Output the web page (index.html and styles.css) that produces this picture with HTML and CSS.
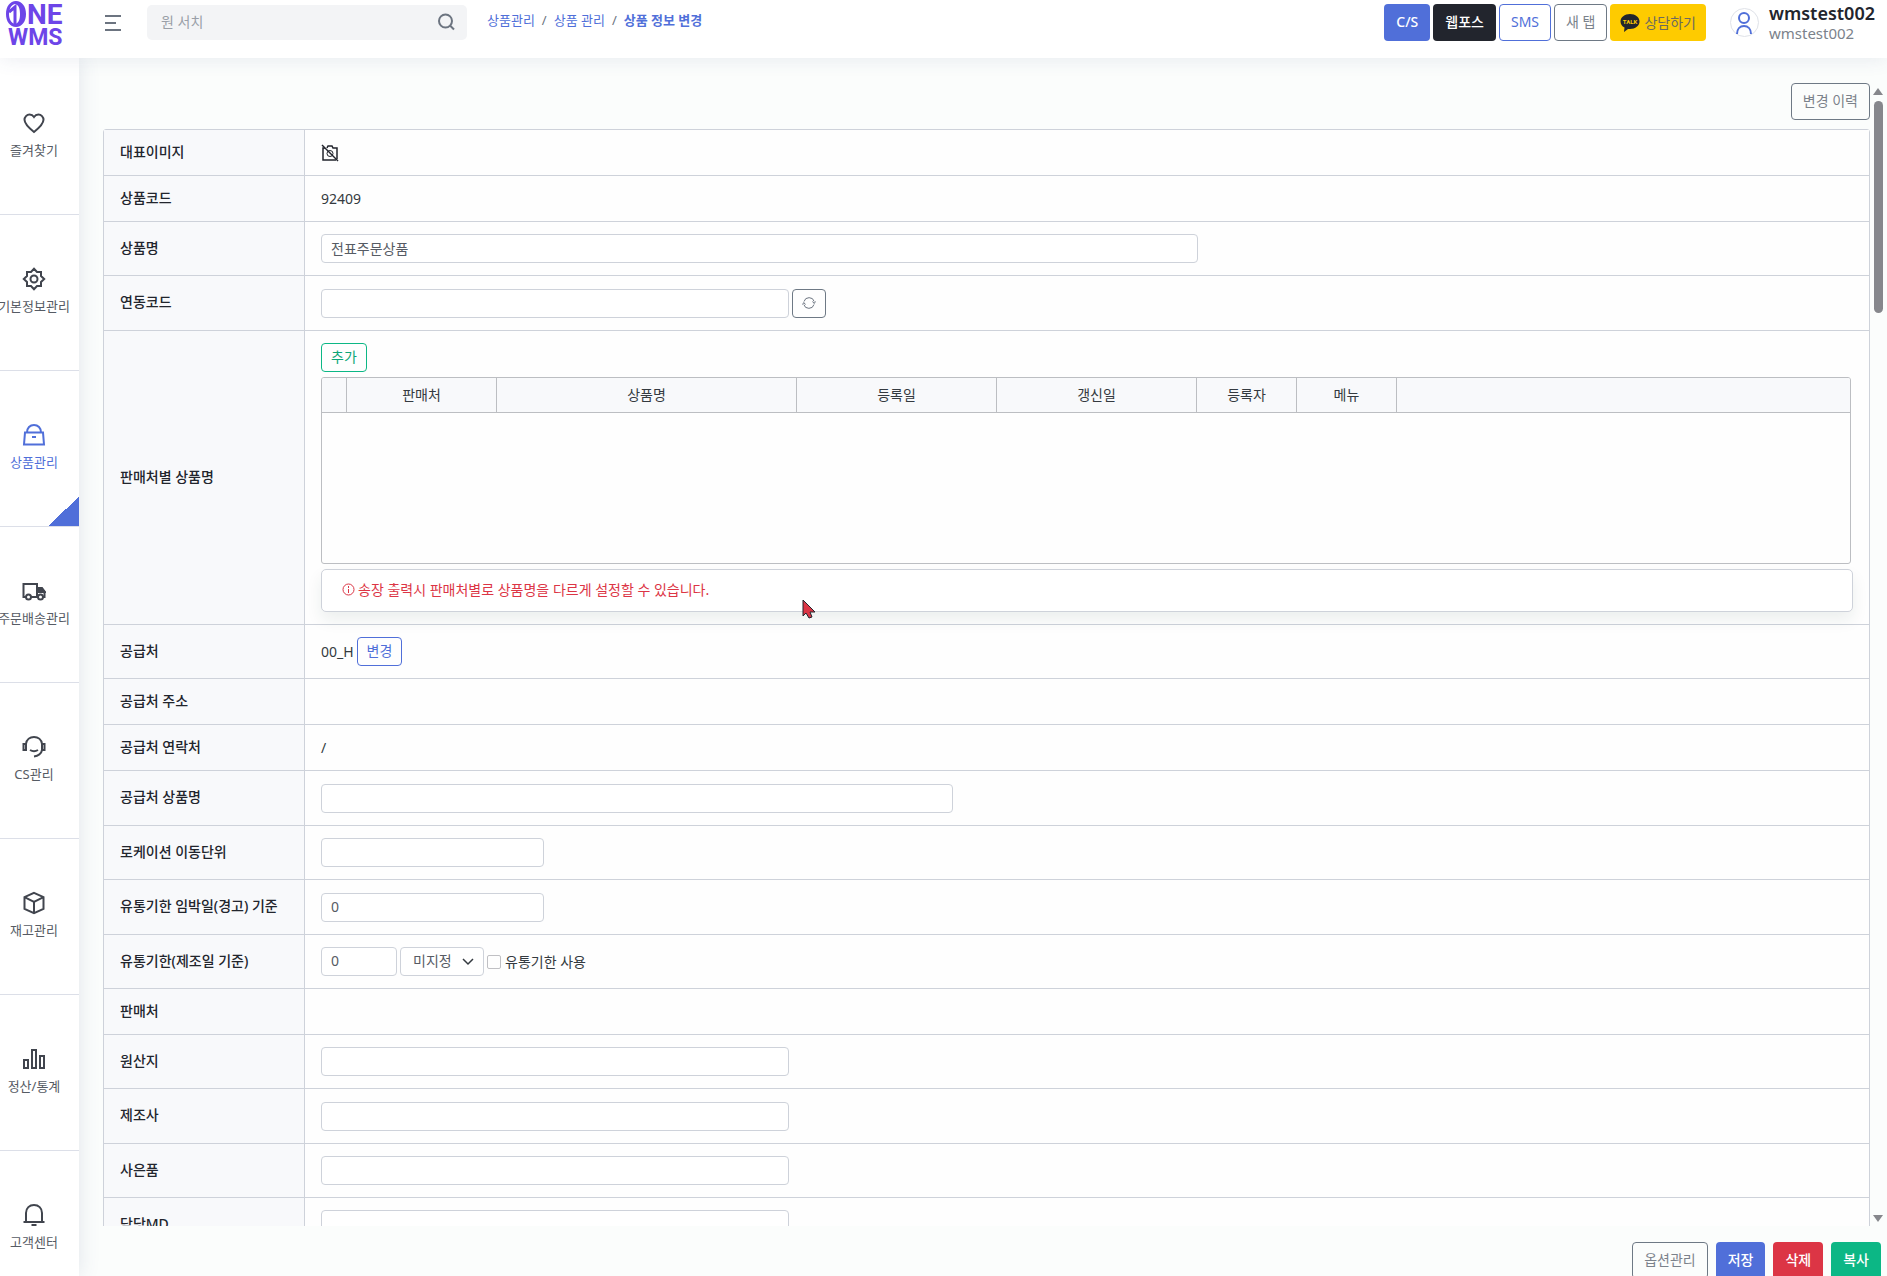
FILE: index.html
```html
<!DOCTYPE html>
<html lang="ko">
<head>
<meta charset="utf-8">
<title>ONE WMS - 상품 정보 변경</title>
<link rel="stylesheet" href="styles.css">
</head>
<body>

<header class="topbar">
  <a class="logo" href="#" aria-label="ONE WMS">
    <svg width="64" height="50" viewBox="0 0 64 50">
      <path fill="#6d45e8" fill-rule="evenodd" d="M16 1c6 0 10 5.500 10 13s-4 13-10 13S6 21.500 6 14 10 1 16 1zM15 4c-4 1-6 5-6 10s2 9 6 10c4-1 5-5 5-10s-1-9-5-10z"/>
      <path d="M9 12l6-5v19" fill="none" stroke="#6d45e8" stroke-width="3"/>
      <text class="logo-ne" x="27" y="24">NE</text>
      <text class="logo-wms" x="8" y="45">WMS</text>
    </svg>
  </a>
  <button class="icon-btn menu-btn" type="button" aria-label="메뉴">
    <svg width="18" height="18" viewBox="0 0 18 18" fill="none" stroke="#6c7480" stroke-width="2"><path d="M1 2h16M1 9h11M1 16h16"/></svg>
  </button>
  <form class="search">
    <input type="text" placeholder="원 서치" aria-label="원 서치">
    <button class="icon-btn" type="button" aria-label="검색">
      <svg width="18" height="18" viewBox="0 0 18 18" fill="none" stroke="#6c7480" stroke-width="2"><circle cx="8.500" cy="8" r="6.500"/><path d="M13 12.500l4 4"/></svg>
    </button>
  </form>
  <nav class="breadcrumb">
    <a href="#">상품관리</a><span>/</span><a href="#">상품 관리</a><span>/</span><a class="current" href="#">상품 정보 변경</a>
  </nav>
  <div class="top-btns">
    <button class="btn blue" type="button">C/S</button>
    <button class="btn dark" type="button">웹포스</button>
    <button class="btn line-blue" type="button">SMS</button>
    <button class="btn line-gray" type="button">새 탭</button>
    <button class="btn kakao" type="button">
      <svg width="20" height="19" viewBox="0 0 20 19"><path d="M10 1c5.400 0 9.500 3.300 9.500 7.500S15.400 16 10 16H8l-4 3 .5-4.400C2 13.200.5 11 .5 8.500.5 4.300 4.600 1 10 1z" fill="#22252d"/><text class="talk-text" x="10" y="11">TALK</text></svg>
      상담하기
    </button>
  </div>
  <div class="user">
    <span class="avatar">
      <svg width="18" height="24" viewBox="0 0 18 24" fill="none" stroke="#506fd9" stroke-width="2"><circle cx="9" cy="7" r="5"/><path d="M2 23c0-5 3-8 7-8s7 3 7 8"/></svg>
    </span>
    <div>
      <div class="user-name">wmstest002</div>
      <div class="user-id">wmstest002</div>
    </div>
  </div>
</header>

<div class="layout">
  <nav class="sidebar">
    <a href="#">
      <svg width="24" height="24" viewBox="0 0 24 24"><path d="M12 21C7 17 2.500 13.200 2.500 8.800 2.500 6 4.800 3.500 7.600 3.500c1.800 0 3.400 1 4.400 2.500 1-1.500 2.600-2.500 4.400-2.500 2.800 0 5.100 2.500 5.100 5.300C21.500 13.200 17 17 12 21z"/></svg>
      <span>즐겨찾기</span>
    </a>
    <a href="#">
      <svg width="24" height="24" viewBox="0 0 24 24"><path d="M12 1.800L15 5h4v4l3.200 3-3.200 3v4h-4l-3 3.200L9 19H5v-4l-3.200-3L5 9V5h4z"/><circle cx="12" cy="12" r="3.500"/></svg>
      <span>기본정보관리</span>
    </a>
    <a class="active" href="#">
      <svg width="24" height="24" viewBox="0 0 24 24"><path d="M3 9.500h18l1 12H2zM5 9.500C5 5 8 2 12 2s7 3 7 7.500M10 14h4"/></svg>
      <span>상품관리</span>
    </a>
    <a href="#">
      <svg width="24" height="24" viewBox="0 0 24 24"><path d="M4 18H1.500V5H15v13H9M15 9h4l3.500 4v5H21M15 18h1"/><path d="M17 9h3l3 4h-6z" fill="#41454e"/><circle cx="6.500" cy="18" r="2.500"/><circle cx="18.500" cy="18" r="2.500"/></svg>
      <span>주문배송관리</span>
    </a>
    <a href="#">
      <svg width="24" height="24" viewBox="0 0 24 24"><path d="M4 9c.5-4.500 4-7 8-7s7.500 2.500 8 7v6c-.5 3.500-4 6-8 6.500M4 9H1.500v6H4zM20 9h2.500v6H20M8 15c2.500 1.500 5.500 1.500 8 0"/></svg>
      <span>CS관리</span>
    </a>
    <a href="#">
      <svg width="24" height="24" viewBox="0 0 24 24"><path d="M12 1.800l9.500 4.400v11.600L12 22.200l-9.500-4.400V6.200zM2.500 6.200L12 11l9.500-4.800M12 11v11"/></svg>
      <span>재고관리</span>
    </a>
    <a href="#">
      <svg width="24" height="24" viewBox="0 0 24 24"><path d="M2 13h4v8H2zM10 3h4v18h-4zM18 9h4v12h-4z"/></svg>
      <span>정산/통계</span>
    </a>
    <a href="#">
      <svg width="24" height="24" viewBox="0 0 24 24"><path d="M4 19v-9c0-5 3.500-8 8-8s8 3 8 8v9M1.500 19h21M9.500 22h5"/></svg>
      <span>고객센터</span>
    </a>
  </nav>

  <main class="content">
    <div class="viewport">
      <div class="page">
        <div class="page-head"><button class="btn line-gray" type="button">변경 이력</button></div>

        <table class="form-table">
          <tr><th scope="row">대표이미지</th>
            <td><svg class="no-img" width="18" height="18" viewBox="0 0 18 18" fill="none" stroke="#22252d"><path stroke-width="1.500" d="M4 4H2v12h13M6 4l1-2h4l1 2h4v11"/><circle cx="9" cy="9.500" r="3"/><path stroke-width="1.500" d="M1 1l16 16"/></svg></td></tr>
          <tr><th scope="row">상품코드</th><td>92409</td></tr>
          <tr><th scope="row"><label for="name">상품명</label></th>
            <td><div class="line"><input class="w-name" id="name" type="text" value="전표주문상품"></div></td></tr>
          <tr class="tall"><th scope="row"><label for="link">연동코드</label></th>
            <td><div class="line"><input class="w-std" id="link" type="text">
              <button class="btn sm line-gray" type="button" aria-label="새로고침"><svg width="14" height="14" viewBox="0 0 14 14" fill="none" stroke="#6c7480"><path d="M2 5.500a5.300 5.300 0 0 1 10.200 0M12 8.500a5.300 5.300 0 0 1-10.200 0M.5 8.500l1.300-2 1.700 2M10.500 5.500l1.700 2 1.300-2"/></svg></button></div></td></tr>
          <tr><th scope="row">판매처별 상품명</th>
            <td>
              <div class="vendor">
                <button class="btn sm line-green" type="button">추가</button>
                <div class="grid">
                  <table>
                    <colgroup><col class="c-no"><col class="c-shop"><col class="c-name"><col class="c-date"><col class="c-date"><col class="c-user"><col class="c-user"><col></colgroup>
                    <tr><th></th><th>판매처</th><th>상품명</th><th>등록일</th><th>갱신일</th><th>등록자</th><th>메뉴</th><th></th></tr>
                  </table>
                </div>
                <p class="notice">
                  <svg width="13" height="13" viewBox="0 0 13 13" fill="none" stroke="#dc3545"><circle cx="6.500" cy="6.500" r="5.500"/><path d="M6.500 6v4M6.500 3v2"/></svg>
                  송장 출력시 판매처별로 상품명을 다르게 설정할 수 있습니다.
                </p>
              </div>
            </td></tr>
          <tr><th scope="row">공급처</th>
            <td><div class="line">00_H <button class="btn sm line-blue" type="button">변경</button></div></td></tr>
          <tr><th scope="row">공급처 주소</th><td></td></tr>
          <tr><th scope="row">공급처 연락처</th><td>/</td></tr>
          <tr class="tall"><th scope="row"><label for="sname">공급처 상품명</label></th>
            <td><div class="line"><input class="w-supply" id="sname" type="text"></div></td></tr>
          <tr><th scope="row"><label for="unit">로케이션 이동단위</label></th>
            <td><div class="line"><input class="w-num" id="unit" type="text"></div></td></tr>
          <tr class="tall"><th scope="row"><label for="warn">유통기한 임박일(경고) 기준</label></th>
            <td><div class="line"><input class="w-num" id="warn" type="text" value="0"></div></td></tr>
          <tr><th scope="row"><label for="expire">유통기한(제조일 기준)</label></th>
            <td><div class="line"><input class="w-day" id="expire" type="text" value="0">
              <span class="select"><select aria-label="기간 단위"><option>미지정</option></select><svg width="12" height="8" viewBox="0 0 12 8" fill="none" stroke="#343a40" stroke-width="1.500"><path d="M1 1l5 5 5-5"/></svg></span>
              <label class="check"><input type="checkbox">유통기한 사용</label></div></td></tr>
          <tr><th scope="row">판매처</th><td></td></tr>
          <tr><th scope="row"><label for="origin">원산지</label></th>
            <td><div class="line"><input class="w-std" id="origin" type="text"></div></td></tr>
          <tr class="tall"><th scope="row"><label for="maker">제조사</label></th>
            <td><div class="line"><input class="w-std" id="maker" type="text"></div></td></tr>
          <tr><th scope="row"><label for="gift">사은품</label></th>
            <td><div class="line"><input class="w-std" id="gift" type="text"></div></td></tr>
          <tr><th scope="row"><label for="md">담당MD</label></th>
            <td><div class="line"><input class="w-std" id="md" type="text"></div></td></tr>
        </table>
      </div>

      <div class="scrollbar">
        <i class="up"></i><i class="thumb"></i><i class="down"></i>
      </div>
    </div>

    <footer class="actions">
      <button class="btn line-gray" type="button">옵션관리</button>
      <button class="btn blue" type="button">저장</button>
      <button class="btn red" type="button">삭제</button>
      <button class="btn green" type="button">복사</button>
    </footer>
  </main>
</div>

<svg class="pointer" width="14" height="20" viewBox="0 0 14 20"><path d="M1 1v16l3-3 3 5 3-1-2-5h5z" fill="#dc3545" stroke="#22252d"/></svg>

</body>
</html>
```
FILE: styles.css
```css
* { box-sizing: border-box; }

body {
  margin: 0;
  height: 100vh;
  display: flex;
  flex-direction: column;
  overflow: hidden;
  background: #fbfdfc;
  color: #343a40;
  font: 14px/20px "Noto Sans", "Noto Sans CJK KR", sans-serif;
}

a { text-decoration: none; }
svg { flex: none; }
input, select, button { font: inherit; color: inherit; }

/* buttons */
.btn {
  display: inline-flex;
  align-items: center;
  justify-content: center;
  gap: 4px;
  height: 37px;
  padding: 0 11px 2px;
  border: 1px solid transparent;
  border-radius: 4px;
  background: none;
  white-space: nowrap;
}
.btn.sm { height: 29px; padding: 0 9px 1px; }
.blue { background: #506fd9; color: #fff; font-weight: 500; }
.dark { background: #22252d; color: #fff; font-weight: 500; }
.red { background: #dc3545; color: #fff; font-weight: 500; }
.green { background: #0cb785; color: #fff; font-weight: 500; }
.kakao { padding: 0 9px; background: #fecb00; color: #6c6a60; }
.line-blue { border-color: #506fd9; color: #506fd9; }
.line-gray { border-color: #6e7985; color: #7b828b; }
.line-green { border-color: #0cb785; color: #0ca678; }
.icon-btn { display: flex; padding: 0; border: 0; background: none; }

/* top bar */
.topbar {
  position: relative;
  z-index: 2;
  flex: none;
  display: flex;
  align-items: flex-start;
  height: 58px;
  padding: 4px 12px 0 0;
  background: #fff;
  box-shadow: 0 0 20px rgba(65, 80, 130, .12);
}
.logo { height: 50px; margin-top: -4px; }
.logo-ne { font: bold 28px "Roboto", sans-serif; fill: #6d45e8; }
.logo-wms { font: bold 23px "Roboto", sans-serif; fill: #6d45e8; }
.menu-btn { margin: 10px 0 0 40px; }
.search {
  display: flex;
  align-items: center;
  width: 320px;
  height: 35px;
  margin: 1px 20px 0 25px;
  padding: 0 12px 1px 14px;
  border-radius: 5px;
  background: #f3f4f6;
}
.search input { flex: 1; min-width: 0; border: 0; padding: 0; background: none; outline: 0; }
.search input::placeholder { color: #9a9fa8; }
.breadcrumb { display: flex; gap: 7px; margin-top: 6px; font-size: 13px; color: #6c7480; }
.breadcrumb a { color: #506fd9; }
.breadcrumb .current { font-weight: bold; }
.top-btns { display: flex; gap: 3px; margin-left: auto; }
.talk-text { font: bold 6px "Roboto", sans-serif; fill: #fecb00; text-anchor: middle; }
.user { display: flex; gap: 10px; margin-left: 24px; }
.avatar {
  display: flex;
  justify-content: center;
  width: 29px;
  height: 29px;
  margin-top: 4px;
  padding-top: 2px;
  border: 1px solid #dfe2e8;
  border-radius: 50%;
}
.user > div { margin-top: -1px; }
.user-name { font-size: 18px; font-weight: 600; color: #22252d; }
.user-id { font-size: 15px; color: #7b828b; }

.layout { flex: 1; display: flex; min-height: 0; }

/* side menu */
.sidebar {
  flex: none;
  width: 79px;
  padding-top: 1px;
  overflow: hidden;
  background: #fff;
  box-shadow: 0 0 20px rgba(65, 80, 130, .14);
}
.sidebar a {
  display: flex;
  flex-direction: column;
  align-items: center;
  justify-content: center;
  gap: 5px;
  height: 156px;
  padding: 0 11px 2px 0;
  border-bottom: 1px solid #dcdfe8;
  color: #565b64;
  font-size: 13px;
  white-space: nowrap;
}
.sidebar svg { fill: none; stroke: #41454e; stroke-width: 2; }
.sidebar .active {
  color: #506fd9;
  background: linear-gradient(135deg, transparent 50%, #506fd9 50%) right bottom / 30px 30px no-repeat;
}
.sidebar .active svg { stroke: #506fd9; }

/* content */
.content { flex: 1; min-width: 0; display: flex; flex-direction: column; padding: 25px 4px 0 24px; }
.viewport { flex: 1; min-height: 0; display: flex; gap: 3px; }
.page { flex: 1; min-width: 0; overflow: hidden; }
.page-head { display: flex; justify-content: flex-end; height: 46px; }

.form-table {
  width: 100%;
  border: 1px solid #ced2da;
  border-radius: 3px;
  border-spacing: 0;
}
.form-table > tbody > tr > th {
  width: 201px;
  padding: 0 16px 2px;
  border-right: 1px solid #ced2da;
  border-bottom: 1px solid #ced2da;
  background: #f8f9fb;
  color: #22252d;
  font-weight: 500;
  text-align: left;
}
.form-table > tbody > tr > td {
  height: 46px;
  padding: 12px 16px;
  border-bottom: 1px solid #ced2da;
  background: #fefefe;
}
.form-table > tbody > .tall > td { height: 55px; }
.no-img { display: block; }

.line { display: flex; align-items: center; gap: 3px; }
.line input[type=text], .select select {
  height: 29px;
  padding: 0 9px 2px;
  border: 1px solid #ced2da;
  border-radius: 4px;
  background: #fff;
  color: #565b64;
}
.w-name { width: 877px; }
.w-std { width: 468px; }
.w-supply { width: 632px; }
.w-num { width: 223px; }
.w-day { width: 76px; }
.select { display: grid; align-items: center; width: 84px; }
.select select { grid-area: 1 / 1; appearance: none; padding: 0 12px 2px; }
.select svg { grid-area: 1 / 1; justify-self: end; margin-right: 10px; }
.check { display: flex; align-items: center; gap: 4px; }
.check input {
  appearance: none;
  width: 14px;
  height: 14px;
  margin: 0;
  border: 1px solid #c0c0c4;
  border-radius: 2px;
}

/* product names by vendor */
.vendor { display: flex; flex-direction: column; align-items: flex-start; gap: 5px; }
.grid {
  width: calc(100% - 2px);
  height: 187px;
  border: 1px solid #bcbec2;
  border-radius: 3px;
  overflow: hidden;
}
.grid table { width: 100%; table-layout: fixed; border-spacing: 0; }
.grid th {
  height: 35px;
  padding: 0;
  border-right: 1px solid #bcbec2;
  border-bottom: 1px solid #bcbec2;
  background: #f8f9fb;
  font-weight: normal;
}
.grid th:last-child { border-right: 0; }
.c-no { width: 25px; }
.c-shop { width: 150px; }
.c-name { width: 300px; }
.c-date { width: 200px; }
.c-user { width: 100px; }
.notice {
  display: flex;
  align-items: center;
  gap: 3px;
  width: 100%;
  height: 43px;
  margin: 0;
  padding: 0 20px 2px;
  border: 1px solid #ced2da;
  border-radius: 5px;
  background: #fff;
  color: #dc3545;
  box-shadow: 0 8px 16px rgba(30, 60, 50, .08);
}

/* scrollbar */
.scrollbar { display: flex; flex-direction: column; align-items: center; width: 10px; padding: 5px 0 4px; }
.scrollbar .up { border: 5px solid transparent; border-top: 0; border-bottom: 7px solid #86878c; }
.scrollbar .thumb { width: 9px; height: 212px; margin-top: 6px; border-radius: 5px; background: #86878c; }
.scrollbar .down { margin-top: auto; border: 5px solid transparent; border-bottom: 0; border-top: 7px solid #86878c; }

.actions { flex: none; display: flex; justify-content: flex-end; gap: 8px; height: 50px; padding: 16px 2px 0 0; }

.pointer { position: absolute; left: 802px; top: 599px; z-index: 3; }
```
